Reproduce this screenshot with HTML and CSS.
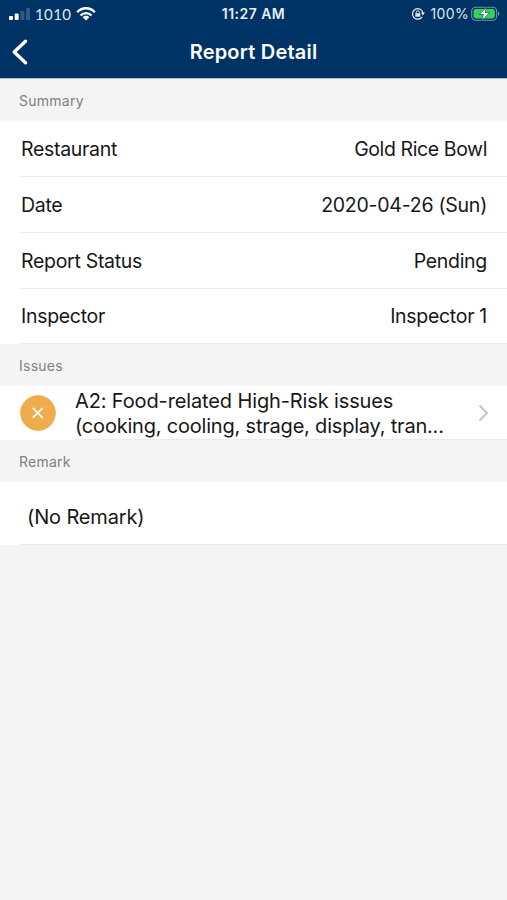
FILE: index.html
```html
<!DOCTYPE html>
<html lang="en">
<head>
<meta charset="utf-8">
<title>Report Detail</title>
<link rel="stylesheet" href="styles.css">
</head>
<body>
<header class="top">
  <div class="status">
    <div class="carrier">
      <svg class="signal" width="22" height="14" viewBox="0 0 22 14"><rect x="0" y="9" width="4" height="4" rx="1" fill="#fff"/><rect x="5.7" y="6.4" width="4" height="6.6" rx="1" fill="#fff"/><rect x="11.4" y="4" width="4" height="9" rx="1" fill="#305b82"/><rect x="17" y="1" width="4" height="12" rx="1" fill="#305b82"/></svg>
      <span class="carrier-name">1010</span>
      <svg class="wifi" width="20" height="14" viewBox="0 0 20 14" fill="none" stroke="#fff" stroke-width="2.3"><path d="M1.2 5.3C6-.1 14-.1 18.8 5.3M4.5 8.5c3-3.3 8-3.3 11 0"/><path d="M6.7 10.2c1.8-1.9 4.8-1.9 6.6 0L10 13.6z" fill="#fff" stroke="none"/></svg>
    </div>
    <time class="clock">11:27 AM</time>
    <div class="power">
      <svg class="lock" width="14" height="14" viewBox="0 0 14 14" fill="none" stroke="#dfe7ef" stroke-width="1.3"><path d="M11.1 10A5.3 5.3 0 1 1 12 6"/><path d="M9.8 5.6h4.2l-2.1 3z" fill="#dfe7ef" stroke="none"/><path d="M5.2 6.5V5.4a1.6 1.6 0 0 1 3.2 0v1.1" stroke-width="1"/><rect x="4.3" y="6.2" width="5" height="3.6" rx=".6" fill="#dfe7ef" stroke="none"/></svg>
      <span class="percent">100%</span>
      <svg class="battery" width="29" height="16" viewBox="0 0 29 16"><rect x=".7" y="1.2" width="25" height="13" rx="4" fill="none" stroke="#7890a9" stroke-width="1.1"/><rect x="2.5" y="3" width="21.4" height="9.4" rx="2.4" fill="#35d35b"/><path d="M27 5.6c1.8.6 1.8 3.6 0 4.2z" fill="#7890a9"/><path d="M15.6 1.2 8.2 8.5h4.3L10.8 14.6l7.9-7.9h-4.6z" fill="#fff" stroke="#176052" stroke-width=".8"/></svg>
    </div>
  </div>
  <nav class="nav">
    <svg class="back" width="18" height="28" viewBox="0 0 18 28" fill="none" stroke="#fff" stroke-width="3.4" stroke-linecap="round" stroke-linejoin="round"><path d="M14.5 3.2 3.2 14l11.3 10.8"/></svg>
    <h1 class="title">Report Detail</h1>
  </nav>
</header>
<main>
  <h2 class="section">Summary</h2>
  <dl class="rows">
    <div class="row"><dt>Restaurant</dt><dd class="name">Gold Rice Bowl</dd></div>
    <div class="row"><dt>Date</dt><dd class="date">2020-04-26 (Sun)</dd></div>
    <div class="row"><dt>Report Status</dt><dd>Pending</dd></div>
    <div class="row last"><dt>Inspector</dt><dd>Inspector 1</dd></div>
  </dl>
  <h2 class="section">Issues</h2>
  <div class="issue">
    <svg class="badge" width="36" height="36" viewBox="0 0 36 36"><circle cx="18" cy="18" r="17.8" fill="#efac4d"/><path d="m13.2 13.4 9 9m0-9-9 9" stroke="#fff" stroke-width="1.7" stroke-linecap="round"/></svg>
    <div class="issue-body">
      <p class="issue-text"><span class="line1">A2: Food-related High-Risk issues</span><br><span class="line2">(cooking, cooling, strage, display, tran...</span></p>
      <svg class="chevron" width="12" height="18" viewBox="0 0 12 18" fill="none" stroke="#c4c4c6" stroke-width="2"><path d="m1.5 1.5 7.5 7.5-7.5 7.5"/></svg>
    </div>
  </div>
  <h2 class="section">Remark</h2>
  <div class="note"><p>(No Remark)</p></div>
</main>
</body>
</html>
```
FILE: styles.css
```css
* { box-sizing: border-box; }
body { margin: 0; min-height: 900px; background: #f4f4f4; color: #171717; font-family: Inter, "Liberation Sans", sans-serif; }
h1, h2, p, dl, dt, dd { margin: 0; font-weight: 400; }
svg { display: block; flex: none; }
.top { height: 79px; background: #003365; border-bottom: 1px solid #a9bdcb; color: #fff; }
.status { display: grid; grid-template-columns: 1fr auto 1fr; align-items: center; height: 27px; padding: 0 7px 0 9px; }
.carrier, .power { display: flex; align-items: center; }
.carrier-name { margin-left: 4px; width: 37px; font: 15px/20px Lato, sans-serif; letter-spacing: .4px; color: #dfe7ef; }
.wifi { margin-left: 4px; }
.clock { margin-right: 2px; font-size: 14px; font-weight: 600; letter-spacing: .45px; color: #e7edf3; }
.power { justify-content: flex-end; }
.lock { margin-right: 5px; }
.percent { margin-right: 2px; font-size: 14px; letter-spacing: .35px; color: #dfe7ef; }
.nav { display: grid; grid-template-columns: 40px 1fr 40px; align-items: center; height: 50px; }
.back { margin-left: 11px; }
.title { text-align: center; font-size: 20px; line-height: 24px; font-weight: 600; letter-spacing: .2px; }
.section { height: 42px; padding-left: 19px; font-size: 14px; line-height: 43px; letter-spacing: .25px; color: #808080; }
.rows { background: #fff; padding-left: 20px; }
.row { display: flex; justify-content: space-between; height: 56px; padding: 0 20px 0 1px; border-bottom: 1px solid #ebebeb; font-size: 19.5px; line-height: 57px; letter-spacing: -.3px; }
.row.last { height: 55px; line-height: 55px; }
.name { letter-spacing: -.4px; }
.date { letter-spacing: -.25px; }
.issue { display: flex; height: 54px; padding-left: 20px; background: #fff; }
.badge { margin-top: 9px; }
.issue-body { display: flex; flex: 1; align-items: center; justify-content: space-between; margin-left: 19px; padding-right: 17px; border-bottom: 1px solid #ebebeb; }
.issue-text { padding-top: 2px; font-size: 20px; line-height: 25px; white-space: nowrap; }
.line1 { letter-spacing: -.13px; }
.line2 { letter-spacing: -.2px; }
.note { height: 63px; padding-left: 20px; background: #fff; }
.note p { height: 63px; padding-left: 7px; border-bottom: 1px solid #ebebeb; font-size: 20px; line-height: 70px; letter-spacing: -.15px; }
```
